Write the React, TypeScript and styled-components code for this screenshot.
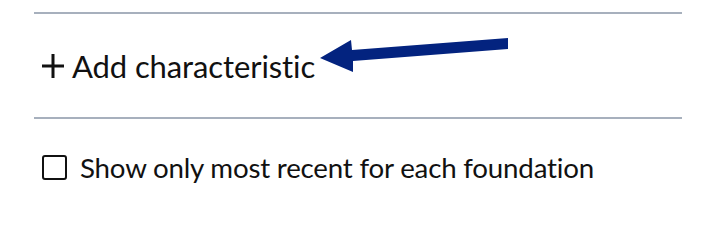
import React from 'react';
import styled, { createGlobalStyle } from 'styled-components';

const GlobalStyle = createGlobalStyle`
  body {
    margin: 0;
    background: #ffffff;
    font-family: Lato, "Open Sans", sans-serif;
    color: #111111;
  }
`;

const App: React.FC = () => {
  return (
    <>
      <GlobalStyle />
      <Panel>
        <Divider />
        <AddRow>
          <AddButton>
            <svg width="22" height="24" viewBox="0 0 22 24">
              <path d="M11 0 V24 M0 12 H22" stroke="#111111" strokeWidth="3" />
            </svg>
            Add characteristic
          </AddButton>
          <Arrow width="196" height="42" viewBox="0 0 196 42">
            <polygon points="2,22 33,4 34,14 190,2 190,13 35,25 35,36" fill="#03237f" />
          </Arrow>
        </AddRow>
        <Divider />
        <CheckRow>
          <Box type="checkbox" />
          <Label>Show only most recent for each foundation</Label>
        </CheckRow>
      </Panel>
    </>
  );
};

export default App;

const Panel = styled.div`
  width: 648px;
  padding: 12px 0 0 34px;
`;

const Divider = styled.div`
  height: 2px;
  background: #a7b0bd;
`;

const AddRow = styled.div`
  display: flex;
  align-items: center;
  height: 103px;
`;

const AddButton = styled.button`
  display: flex;
  align-items: center;
  gap: 8px;
  border: none;
  background: none;
  padding: 0 0 0 8px;
  font-family: Lato, "Open Sans", sans-serif;
  font-size: 31px;
  letter-spacing: -0.1px;
  color: #111111;
  cursor: pointer;
`;

const Arrow = styled.svg`
  margin-left: 3px;
  margin-top: -18px;
`;

const CheckRow = styled.label`
  display: flex;
  align-items: center;
  gap: 13px;
  padding: 32px 0 0 8px;
`;

const Box = styled.input`
  appearance: none;
  margin: 0;
  width: 25px;
  height: 25px;
  border: 2.5px solid #111111;
  border-radius: 3px;
  box-sizing: border-box;
`;

const Label = styled.span`
  font-size: 27.7px;
  letter-spacing: -0.2px;
`;
